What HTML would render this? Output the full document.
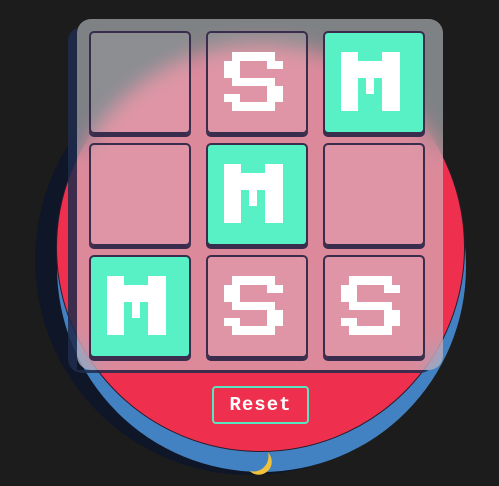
<!DOCTYPE html>
<html><head><style>
html,body{margin:0;padding:0;}
body{width:499px;height:486px;background:#1c1c1c;position:relative;overflow:hidden;font-family:"Liberation Mono",monospace;}
.c{position:absolute;border-radius:50%;}
#shadow{left:35px;top:45px;width:430px;height:430px;background:#0e1628;}
#blue{left:57px;top:62px;width:409px;height:410px;background:#4282c2;}
#red{left:56px;top:43px;width:409px;height:409px;background:#ee2f4e;border:1px solid #2a1a2a;box-sizing:border-box;}
#bshadow{position:absolute;left:68px;top:27px;width:366px;height:346px;border-radius:14px;background:#1f2b4c;opacity:.85;clip-path:polygon(0 0,9px 0,9px 343px,366px 343px,366px 346px,0 346px);}
#panel{position:absolute;left:77px;top:19px;width:366px;height:351px;border-radius:14px;background:rgba(205,210,215,.56);backdrop-filter:blur(10px);-webkit-backdrop-filter:blur(10px);}
.t{position:absolute;width:102px;height:103px;box-sizing:border-box;border:2px solid #3a2c4c;border-radius:5px;background:rgba(255,255,255,.1);box-shadow:0 3px 0 #3a2c4c;}
.g{background:#58f0c5;}
.t svg{position:absolute;left:16px;top:19px;}
#reset{position:absolute;left:212px;top:386px;width:97px;height:38px;box-sizing:border-box;border:2px solid #58e6c0;border-radius:4px;color:#fff;font-weight:bold;font-size:19px;text-align:center;line-height:34px;letter-spacing:1px;}
</style></head><body>
<div class="c" id="shadow"></div>
<div class="c" id="blue"></div>
<div class="c" id="red"></div>
<svg style="position:absolute;left:246px;top:449px" width="30" height="30" viewBox="0 0 26 26"><path d="M19 3 A11 11 0 1 1 3 19 A13 13 0 0 0 19 3Z" fill="#f2c23a"/></svg>
<div id="bshadow"></div>
<div id="panel"></div>
<svg width="0" height="0" style="position:absolute"><defs>
<g id="M" fill="#fff"><rect x="0" y="0" width="17" height="59"/><rect x="41" y="0" width="18" height="59"/><rect x="17" y="9" width="24" height="17"/><rect x="25" y="26" width="8" height="16"/></g>
<g id="S" fill="#fff"><rect x="8" y="0" width="43" height="9"/><rect x="43" y="9" width="16" height="8"/><rect x="0" y="9" width="16" height="17"/><rect x="8" y="26" width="43" height="8"/><rect x="43" y="34" width="16" height="16"/><rect x="8" y="50" width="43" height="9"/><rect x="0" y="42" width="16" height="8"/></g>
</defs></svg>
<div class="t" style="left:89px;top:31px"></div>
<div class="t" style="left:206px;top:31px"><svg width="60" height="60"><use href="#S"/></svg></div>
<div class="t g" style="left:323px;top:31px"><svg width="60" height="60"><use href="#M"/></svg></div>
<div class="t" style="left:89px;top:143px"></div>
<div class="t g" style="left:206px;top:143px"><svg width="60" height="60"><use href="#M"/></svg></div>
<div class="t" style="left:323px;top:143px"></div>
<div class="t g" style="left:89px;top:255px"><svg width="60" height="60"><use href="#M"/></svg></div>
<div class="t" style="left:206px;top:255px"><svg width="60" height="60"><use href="#S"/></svg></div>
<div class="t" style="left:323px;top:255px"><svg width="60" height="60"><use href="#S"/></svg></div>
<div id="reset">Reset</div>
</body></html>
